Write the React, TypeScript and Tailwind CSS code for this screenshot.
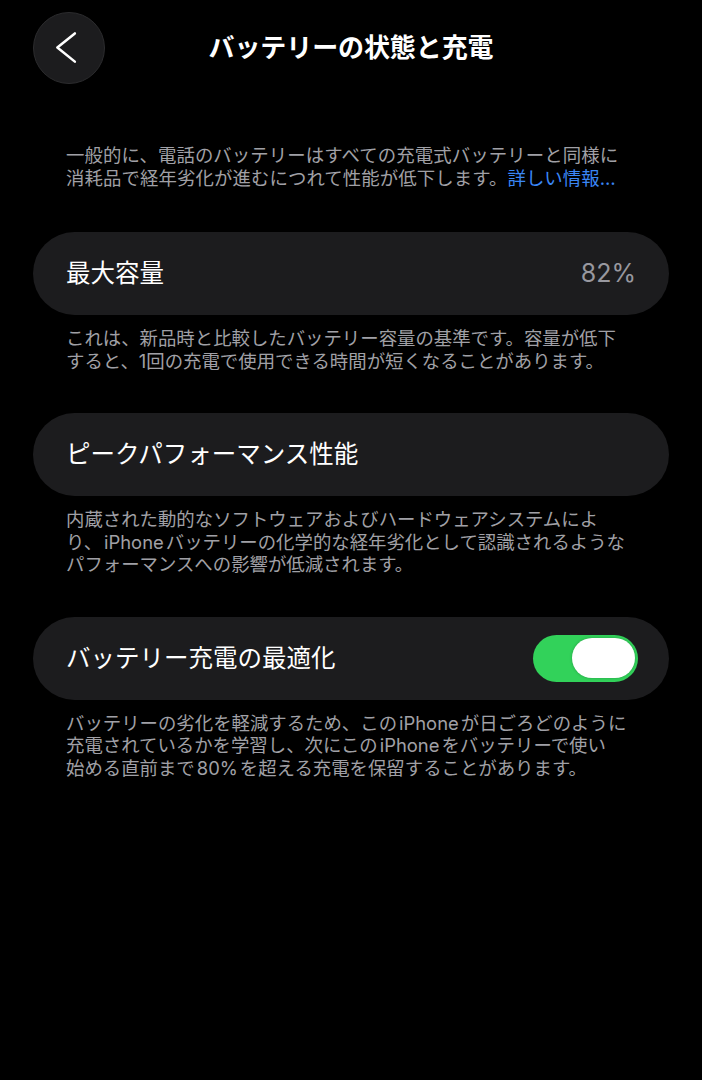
import { ReactNode } from "react";

// Latin words inside Japanese text get a little breathing room, as on iOS
function Latin({ children }: { children: ReactNode }) {
  return <span className="px-[2px]">{children}</span>;
}

function Footnote({ lines }: { lines: ReactNode[] }) {
  return (
    <p className="mt-3 px-[33px] text-[18.4px] leading-[22.5px] text-[#a0a0a6]">
      {lines.map((line, i) => (
        <span key={i} className="block whitespace-nowrap">
          {line}
        </span>
      ))}
    </p>
  );
}

function Toggle({ on }: { on: boolean }) {
  return (
    <button
      className={`flex h-[47px] w-[105px] items-center rounded-full p-[3px] ${
        on ? "justify-end bg-[#32d25a]" : "justify-start bg-[#39393d]"
      }`}
    >
      <span className="h-[40px] w-[63px] rounded-full bg-white shadow-[0_0_3px_rgba(0,0,0,0.25)]" />
    </button>
  );
}

export default function App() {
  return (
    <div className="min-h-screen bg-black font-['Inter','Noto_Sans_CJK_JP',sans-serif] text-white">
      {/* Nav bar */}
      <header className="grid grid-cols-[72px_1fr_72px] items-center px-[33px] pt-3">
        <button className="flex h-[72px] w-[72px] items-center justify-center rounded-full border border-[#2c2c2e] bg-[#1c1c1e]">
          <svg width="72" height="72" viewBox="0 0 72 72" fill="none">
            <path
              d="M42 21 L24 35.5 L42 50"
              stroke="white"
              strokeWidth="2.6"
              strokeLinecap="round"
              strokeLinejoin="round"
            />
          </svg>
        </button>
        <h1 className="text-center text-[26px] font-bold leading-none tracking-[-0.1px]">
          バッテリーの状態と充電
        </h1>
        <div />
      </header>

      <main className="px-[33px] pb-10">
        <p className="mt-[60px] px-[33px] text-[18.4px] leading-[22.5px] tracking-[0.1px] text-[#a0a0a6]">
          <span className="block whitespace-nowrap">
            一般的に、電話のバッテリーはすべての充電式バッテリーと同様に
          </span>
          <span className="block whitespace-nowrap">
            消耗品で経年劣化が進むにつれて性能が低下します。
            <a href="#" className="text-[#3a86f5]">
              詳しい情報…
            </a>
          </span>
        </p>

        {/* Maximum capacity */}
        <section className="mt-[43px]">
          <div className="flex h-[83px] items-center justify-between rounded-full bg-[#1c1c1e] px-[33px]">
            <span className="text-[24.5px]">最大容量</span>
            <span className="text-[25px] text-[#98989f]">82%</span>
          </div>
          <Footnote
            lines={[
              "これは、新品時と比較したバッテリー容量の基準です。容量が低下",
              "すると、1回の充電で使用できる時間が短くなることがあります。",
            ]}
          />
        </section>

        {/* Peak performance */}
        <section className="mt-[41px]">
          <div className="flex h-[83px] items-center rounded-full bg-[#1c1c1e] px-[33px]">
            <span className="text-[24.5px]">ピークパフォーマンス性能</span>
          </div>
          <Footnote
            lines={[
              "内蔵された動的なソフトウェアおよびハードウェアシステムによ",
              <>
                り、<Latin>iPhone</Latin>バッテリーの化学的な経年劣化として認識されるような
              </>,
              "パフォーマンスへの影響が低減されます。",
            ]}
          />
        </section>

        {/* Optimized charging */}
        <section className="mt-[41px]">
          <div className="flex h-[83px] items-center justify-between rounded-full bg-[#1c1c1e] pl-[33px] pr-[31px]">
            <span className="text-[24.5px]">バッテリー充電の最適化</span>
            <Toggle on />
          </div>
          <Footnote
            lines={[
              <>
                バッテリーの劣化を軽減するため、この<Latin>iPhone</Latin>が日ごろどのように
              </>,
              <>
                充電されているかを学習し、次にこの<Latin>iPhone</Latin>をバッテリーで使い
              </>,
              <>
                始める直前まで<Latin>80%</Latin>を超える充電を保留することがあります。
              </>,
            ]}
          />
        </section>
      </main>
    </div>
  );
}
